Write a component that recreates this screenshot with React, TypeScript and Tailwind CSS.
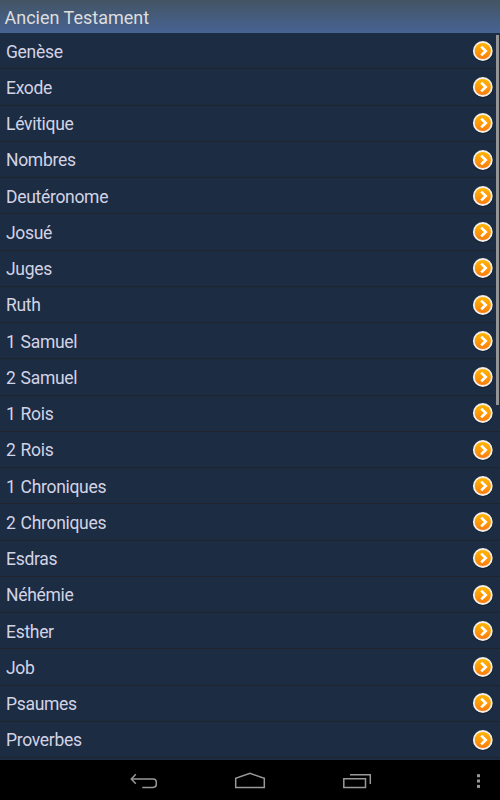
const books = [
  'Genèse',
  'Exode',
  'Lévitique',
  'Nombres',
  'Deutéronome',
  'Josué',
  'Juges',
  'Ruth',
  '1 Samuel',
  '2 Samuel',
  '1 Rois',
  '2 Rois',
  '1 Chroniques',
  '2 Chroniques',
  'Esdras',
  'Néhémie',
  'Esther',
  'Job',
  'Psaumes',
  'Proverbes',
]

function ArrowBadge() {
  return (
    <svg width="22" height="22" viewBox="0 0 22 22" fill="none" className="shrink-0">
      <defs>
        <linearGradient id="badge" x1="0" y1="0" x2="0" y2="1">
          <stop offset="0" stopColor="#ffb400" />
          <stop offset="0.5" stopColor="#ff9c08" />
          <stop offset="1" stopColor="#fb7a0c" />
        </linearGradient>
      </defs>
      <circle cx="11" cy="11.6" r="10.3" fill="#0d1726" opacity="0.6" />
      <circle cx="10.8" cy="11" r="9.9" fill="#f4efe8" />
      <circle cx="10.8" cy="11" r="8.1" fill="url(#badge)" />
      <path d="M9.2 6.6 L13.7 11 L9.2 15.4" stroke="#fff" strokeWidth="2.7" />
    </svg>
  )
}

function BookRow({ name }: { name: string }) {
  return (
    <li className="flex h-[36.25px] items-center justify-between border-b border-[#20242e] pl-1.5 pr-[6.5px] pt-[0.5px]">
      <span className="pt-[1.5px] text-[17.5px] leading-5 tracking-[-0.3px] text-[#d3d3e6] [word-spacing:1px]">
        {name}
      </span>
      <ArrowBadge />
    </li>
  )
}

function NavigationBar() {
  return (
    <nav className="h-10 bg-black">
      <svg width="500" height="40" viewBox="0 0 500 40" fill="none" stroke="#999" strokeWidth="1.5">
        <path d="M131.5 19 H153 Q156.3 19 156.3 22.2 V24.3 Q156.3 27.4 153 27.4 H142.3" />
        <path d="M135.8 14.3 L131.3 19 L135.8 23.7" />
        <path d="M235.7 27.5 V18.4 L250 13.3 L264.3 18.4 V27.5 Z" />
        <path d="M343.8 18.8 H365.5 V27.6 H343.8 Z" />
        <path d="M350 14.8 H370.3 V24" />
        <g fill="#999" stroke="none">
          <rect x="477" y="14.2" width="3" height="3" />
          <rect x="477" y="19.5" width="3" height="3" />
          <rect x="477" y="24.9" width="3" height="3" />
        </g>
      </svg>
    </nav>
  )
}

export default function App() {
  return (
    <div className="flex h-[800px] w-[500px] flex-col overflow-hidden bg-[#1c2c42] font-['Roboto',sans-serif]">
      <header className="flex h-[33px] shrink-0 items-center bg-linear-to-b from-[#435463] to-[#476394] pl-[4.5px] pt-0.5">
        <h1 className="text-[18px] leading-6 text-[#dedede]">Ancien Testament</h1>
      </header>
      <main className="relative h-[727px] shrink-0">
        <ul>
          {books.map((name) => (
            <BookRow key={name} name={name} />
          ))}
        </ul>
        <div className="absolute right-[1px] top-[2px] h-[370px] w-[3px] bg-[#929496]" />
      </main>
      <NavigationBar />
    </div>
  )
}
